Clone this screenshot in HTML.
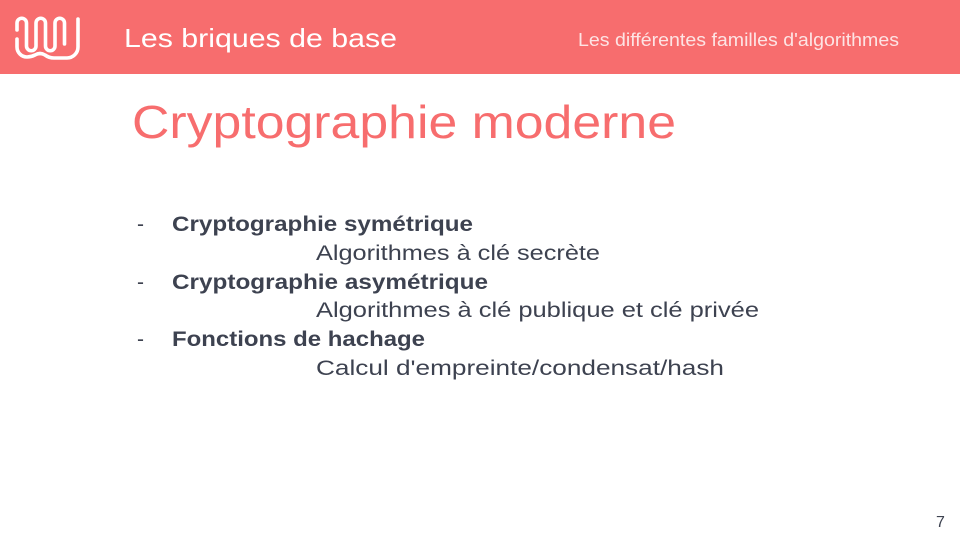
<!DOCTYPE html>
<html><head><meta charset="utf-8"><style>
html,body{margin:0;padding:0;background:#fff}
svg{display:block}
text{font-family:"Liberation Sans",sans-serif}
</style></head><body>
<svg width="960" height="540" viewBox="0 0 960 540">
<rect x="0" y="0" width="960" height="74" fill="#f76d6e"/>
<g fill="none" stroke="#fff" stroke-width="3.6" stroke-linecap="round">
<path d="M17,30 V23 a4.75,4.75 0 0 1 9.5,0 V46 a4.75,4.75 0 0 0 9.5,0 V23 a4.75,4.75 0 0 1 9.5,0 V46 a4.75,4.75 0 0 0 9.5,0 V23 a4.75,4.75 0 0 1 9.5,0 V44"/>
<path d="M17,39 V47 a10,10 0 0 0 10,10 q4,0 8,-2 q5,-3 10,0 q4,3 9,3 H67 a11,11 0 0 0 11,-11 V19"/>
</g>
<text x="124" y="47" font-size="26" fill="#fff" textLength="273" lengthAdjust="spacingAndGlyphs">Les briques de base</text>
<text x="578" y="46" font-size="18" fill="#fde4e4" textLength="321" lengthAdjust="spacingAndGlyphs">Les différentes familles d'algorithmes</text>
<text x="132" y="138" font-size="46" fill="#f76d6e" textLength="544" lengthAdjust="spacingAndGlyphs">Cryptographie moderne</text>
<g font-size="21" fill="#3d4250">
<text x="137" y="231">-</text>
<text x="172" y="231" font-weight="bold" textLength="301" lengthAdjust="spacingAndGlyphs">Cryptographie symétrique</text>
<text x="316" y="260" textLength="284" lengthAdjust="spacingAndGlyphs">Algorithmes à clé secrète</text>
<text x="137" y="289">-</text>
<text x="172" y="289" font-weight="bold" textLength="316" lengthAdjust="spacingAndGlyphs">Cryptographie asymétrique</text>
<text x="316" y="317" textLength="443" lengthAdjust="spacingAndGlyphs">Algorithmes à clé publique et clé privée</text>
<text x="137" y="346">-</text>
<text x="172" y="346" font-weight="bold" textLength="253" lengthAdjust="spacingAndGlyphs">Fonctions de hachage</text>
<text x="316" y="375" textLength="408" lengthAdjust="spacingAndGlyphs">Calcul d'empreinte/condensat/hash</text>
</g>
<text x="936" y="527" font-size="16" fill="#3d4250">7</text>
</svg>
</body></html>
